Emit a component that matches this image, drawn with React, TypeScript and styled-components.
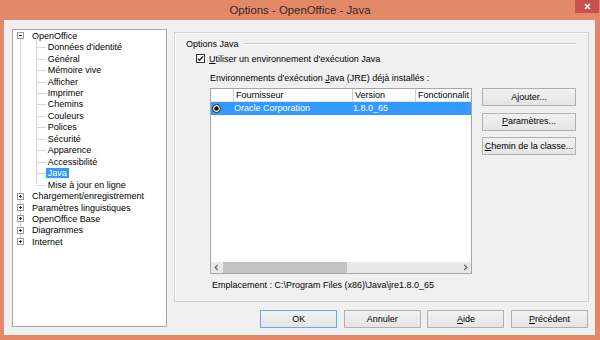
import React from 'react';
import styled, { createGlobalStyle } from 'styled-components';

const GlobalStyle = createGlobalStyle`
  html, body {
    margin: 0;
    padding: 0;
    background: #e2896a;
  }
  body {
    font-family: 'Liberation Sans', Arial, sans-serif;
    font-size: 9px;
    color: #000;
  }
`;

type TreeChild = { label: string; selected?: boolean };

const openOfficeChildren: TreeChild[] = [
  { label: "Données d'identité" },
  { label: 'Général' },
  { label: 'Mémoire vive' },
  { label: 'Afficher' },
  { label: 'Imprimer' },
  { label: 'Chemins' },
  { label: 'Couleurs' },
  { label: 'Polices' },
  { label: 'Sécurité' },
  { label: 'Apparence' },
  { label: 'Accessibilité' },
  { label: 'Java', selected: true },
  { label: 'Mise à jour en ligne' },
];

const collapsedRoots = [
  'Chargement/enregistrement',
  'Paramètres linguistiques',
  'OpenOffice Base',
  'Diagrammes',
  'Internet',
];

const Expander: React.FC<{ open?: boolean }> = ({ open }) => (
  <ExpanderBox>
    <svg width="7" height="7" viewBox="0 0 7 7">
      <rect x="0.5" y="0.5" width="6" height="6" fill="#fff" stroke="#9a9a9a" />
      <line x1="2" y1="3.5" x2="5" y2="3.5" stroke="#333" />
      {!open && <line x1="3.5" y1="2" x2="3.5" y2="5" stroke="#333" />}
    </svg>
  </ExpanderBox>
);

const CheckMark = () => (
  <svg width="9" height="9" viewBox="0 0 9 9">
    <rect x="0.5" y="0.5" width="8" height="8" fill="#fff" stroke="#333" />
    <path d="M2 4.6 L3.7 6.3 L7 2.4" fill="none" stroke="#111" strokeWidth="1.3" />
  </svg>
);

const Radio = () => (
  <svg width="9" height="9" viewBox="0 0 9 9">
    <circle cx="4.5" cy="4.5" r="4" fill="#fff" stroke="#222" />
    <circle cx="4.5" cy="4.5" r="2.2" fill="#111" />
  </svg>
);

const Chevron: React.FC<{ dir: 'left' | 'right' }> = ({ dir }) => (
  <svg width="5" height="7" viewBox="0 0 5 7">
    <path
      d={dir === 'left' ? 'M3.8 0.8 L1.2 3.5 L3.8 6.2' : 'M1.2 0.8 L3.8 3.5 L1.2 6.2'}
      fill="none"
      stroke="#606060"
      strokeWidth="1.2"
    />
  </svg>
);

const App: React.FC = () => (
  <>
    <GlobalStyle />
    <Window>
      <TitleBar>
        <span />
        <Title>Options - OpenOffice - Java</Title>
        <CloseButton>
          <svg width="7" height="7" viewBox="0 0 7 7">
            <path d="M1 1 L6 6 M6 1 L1 6" stroke="#fff" strokeWidth="1.6" />
          </svg>
        </CloseButton>
      </TitleBar>

      <Client>
        <Tree>
          <RootList>
            <TreeRow $level={0}>
              <Expander open />
              <NodeLabel>OpenOffice</NodeLabel>
            </TreeRow>
            <ChildGroup>
              {openOfficeChildren.map((c) => (
                <TreeRow key={c.label} $level={1}>
                  <NodeLabel $selected={c.selected}>{c.label}</NodeLabel>
                </TreeRow>
              ))}
            </ChildGroup>
            {collapsedRoots.map((r) => (
              <TreeRow key={r} $level={0}>
                <Expander />
                <NodeLabel>{r}</NodeLabel>
              </TreeRow>
            ))}
          </RootList>
        </Tree>

        <RightColumn>
          <Panel>
            <SectionHeader>
              <span>Options Java</span>
              <SectionRule />
            </SectionHeader>

            <CheckRow>
              <CheckMark />
              <span>
                <u>U</u>tiliser un environnement d'exécution Java
              </span>
            </CheckRow>

            <JreSection>
              <span>
                Environnements d'exécution <u>J</u>ava (JRE) déjà installés :
              </span>
              <JreBody>
                <Table>
                  <HeaderRow>
                    <HeaderCell />
                    <HeaderCell>Fournisseur</HeaderCell>
                    <HeaderCell>Version</HeaderCell>
                    <HeaderCell>Fonctionnalit</HeaderCell>
                  </HeaderRow>
                  <DataRow $selected>
                    <RadioCell>
                      <Radio />
                    </RadioCell>
                    <DataCell>Oracle Corporation</DataCell>
                    <DataCell>1.8.0_65</DataCell>
                    <DataCell />
                  </DataRow>
                  <TableFill />
                  <ScrollBar>
                    <ScrollArrow>
                      <Chevron dir="left" />
                    </ScrollArrow>
                    <ScrollTrack>
                      <ScrollThumb />
                    </ScrollTrack>
                    <ScrollArrow>
                      <Chevron dir="right" />
                    </ScrollArrow>
                  </ScrollBar>
                </Table>

                <SideButtons>
                  <Button>Ajouter...</Button>
                  <Button>
                    <u>P</u>aramètres...
                  </Button>
                  <Button>
                    <u>C</u>hemin de la classe...
                  </Button>
                </SideButtons>
              </JreBody>
              <Location>Emplacement : C:\Program Files (x86)\Java\jre1.8.0_65</Location>
            </JreSection>
          </Panel>

          <DialogButtons>
            <DialogButton $default>OK</DialogButton>
            <DialogButton>Annuler</DialogButton>
            <DialogButton>
              <u>A</u>ide
            </DialogButton>
            <DialogButton>
              <u>P</u>récédent
            </DialogButton>
          </DialogButtons>
        </RightColumn>
      </Client>
    </Window>
  </>
);

export default App;

// Styled Components
const Window = styled.div`
  width: 600px;
  height: 340px;
  background: #e2896a;
  display: flex;
  flex-direction: column;
  overflow: hidden;
`;

const TitleBar = styled.div`
  height: 20px;
  flex-shrink: 0;
  display: grid;
  grid-template-columns: 1fr auto 1fr;
`;

const Title = styled.div`
  font-size: 11.4px;
  line-height: 20px;
  color: #3b2620;
`;

const CloseButton = styled.div`
  justify-self: end;
  align-self: start;
  width: 24px;
  height: 13px;
  margin-right: 1px;
  background: #c85050;
  display: flex;
  align-items: center;
  justify-content: center;
`;

const Client = styled.div`
  flex: 1;
  margin: 0 5px 5px 4px;
  background: #f0f0f0;
  box-shadow: inset 0 1px 0 #f7f7f7;
  padding: 9px 7px 7px 8px;
  display: grid;
  grid-template-columns: 155px 1fr;
  column-gap: 7px;
  min-height: 0;
`;

const Tree = styled.div`
  height: 298px;
  background: #fff;
  border: 1px solid #a9a9a9;
  box-sizing: border-box;
  overflow: hidden;
`;

const RootList = styled.div`
  position: relative;

  &::before {
    content: '';
    position: absolute;
    left: 7px;
    top: 6px;
    bottom: 6px;
    border-left: 1px solid #d6d6d6;
  }
`;

const ChildGroup = styled.div`
  position: relative;

  &::before {
    content: '';
    position: absolute;
    left: 23px;
    top: -5px;
    bottom: 6px;
    border-left: 1px solid #d6d6d6;
  }
`;

const TreeRow = styled.div<{ $level: number }>`
  position: relative;
  height: 11.46px;
  display: flex;
  align-items: center;
  padding-left: ${(p) => (p.$level === 0 ? 4 : 32.7)}px;
  white-space: nowrap;

  ${(p) =>
    p.$level === 1 &&
    `
    &::before {
      content: '';
      position: absolute;
      left: 23px;
      width: 10px;
      top: 50%;
      border-top: 1px solid #d6d6d6;
    }
  `}
`;

const ExpanderBox = styled.span`
  position: relative;
  display: flex;
  width: 7px;
  height: 7px;
  margin-right: 6px;
`;

const NodeLabel = styled.span<{ $selected?: boolean }>`
  position: relative;
  padding: 0 2px;
  line-height: 10px;
  color: ${(p) => (p.$selected ? '#fff' : '#000')};
  background: ${(p) => (p.$selected ? '#3399ff' : 'transparent')};
`;

const RightColumn = styled.div`
  padding-top: 3px;
  display: flex;
  flex-direction: column;
  gap: 8px;
`;

const Panel = styled.div`
  height: 270px;
  box-sizing: border-box;
  border: 1px solid #d3d3d3;
  box-shadow: inset 1px 1px 0 #fbfbfb;
  padding: 5px 12px 0 11px;
  display: flex;
  flex-direction: column;
`;

const SectionHeader = styled.div`
  height: 11px;
  display: flex;
  align-items: center;
  gap: 5px;
`;

const SectionRule = styled.div`
  flex: 1;
  height: 0;
  border-top: 1px solid #c9c9c9;
  border-bottom: 1px solid #fff;
`;

const CheckRow = styled.div`
  margin: 4px 0 0 10px;
  height: 11px;
  display: flex;
  align-items: center;
  gap: 4px;
`;

const JreSection = styled.div`
  margin: 9px 0 0 24px;
  display: flex;
  flex-direction: column;
  line-height: 11px;
`;

const JreBody = styled.div`
  margin-top: 4px;
  display: flex;
  gap: 10px;
  align-items: flex-start;
`;

const Table = styled.div`
  width: 262px;
  height: 186px;
  box-sizing: border-box;
  border: 1px solid #a5a5a5;
  background: #fff;
  display: flex;
  flex-direction: column;
  overflow: hidden;
`;

const columns = '23px 119px 63px 55px';

const HeaderRow = styled.div`
  display: grid;
  grid-template-columns: ${columns};
  height: 13px;
  flex-shrink: 0;
`;

const HeaderCell = styled.div`
  border-right: 1px solid #d0d0d0;
  border-bottom: 1px solid #e3e3e3;
  padding-left: 2px;
  line-height: 12px;
  white-space: nowrap;
  overflow: hidden;

  &:last-child {
    border-right: none;
  }
`;

const DataRow = styled.div<{ $selected?: boolean }>`
  display: grid;
  grid-template-columns: ${columns};
  height: 13px;
  flex-shrink: 0;
  background: ${(p) => (p.$selected ? '#3399ff' : '#fff')};
  color: ${(p) => (p.$selected ? '#fff' : '#000')};
`;

const RadioCell = styled.div`
  display: flex;
  align-items: center;
  padding-left: 1px;
`;

const DataCell = styled.div`
  line-height: 13px;
  white-space: nowrap;
  overflow: hidden;
`;

const TableFill = styled.div`
  flex: 1;
`;

const ScrollBar = styled.div`
  height: 11px;
  flex-shrink: 0;
  display: flex;
  background: #e8e8e8;
`;

const ScrollArrow = styled.div`
  width: 11px;
  display: flex;
  align-items: center;
  justify-content: center;
`;

const ScrollTrack = styled.div`
  flex: 1;
  display: flex;
  align-items: stretch;
  padding: 0 1px;
`;

const ScrollThumb = styled.div`
  width: 124px;
  background: #c4c4c4;
`;

const SideButtons = styled.div`
  display: flex;
  flex-direction: column;
  gap: 6.5px;
`;

const Button = styled.div`
  width: 94px;
  height: 18px;
  box-sizing: border-box;
  border: 1px solid #b0b0b0;
  background: linear-gradient(#f1f1f1, #e5e5e5);
  display: flex;
  align-items: center;
  justify-content: center;
  white-space: nowrap;
  color: #000;
`;

const Location = styled.div`
  margin: 6px 0 0 2px;
  height: 11px;
  white-space: nowrap;
`;

const DialogButtons = styled.div`
  display: flex;
  justify-content: flex-end;
  gap: 6.6px;
  padding-right: 1px;
`;

const DialogButton = styled.div<{ $default?: boolean }>`
  width: 77px;
  height: 18px;
  box-sizing: border-box;
  border: 1px solid ${(p) => (p.$default ? '#69a7e6' : '#b0b0b0')};
  background: linear-gradient(#f1f1f1, #e5e5e5);
  display: flex;
  align-items: center;
  justify-content: center;
  color: #000;
`;
